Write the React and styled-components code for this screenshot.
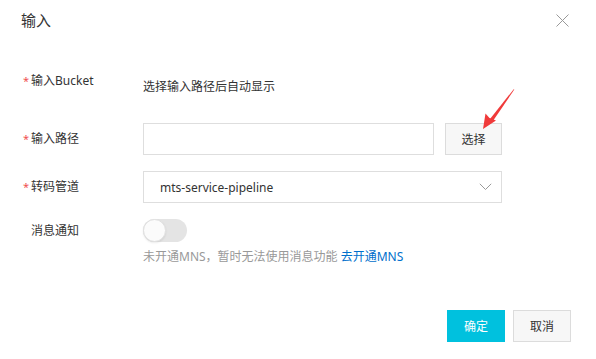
import React from "react";
import styled, { createGlobalStyle } from "styled-components";

const Global = createGlobalStyle`
  html, body { margin: 0; padding: 0; background: #fff; }
  body {
    font-family: "Noto Sans", "Noto Sans CJK SC", sans-serif;
    color: #333;
    -webkit-font-smoothing: antialiased;
  }
  * { box-sizing: border-box; }
`;

const Dialog = styled.div`
  position: relative;
  width: 596px;
  height: 359px;
  background: #fff;
  display: flex;
  flex-direction: column;
`;

const Header = styled.div`
  height: 40px;
  display: flex;
  align-items: center;
  justify-content: space-between;
  padding: 0 27px 0 21px;
`;

const Title = styled.div`
  font-size: 15px;
  line-height: 18px;
  color: #333;
`;

const Close = styled.button`
  width: 13px;
  height: 13px;
  padding: 0;
  border: 0;
  background: none;
  display: flex;
  align-items: center;
  justify-content: center;
  cursor: pointer;
`;

const Body = styled.div`
  padding: 33px 0 0 23px;
  display: flex;
  flex-direction: column;
`;

const Row = styled.div`
  display: grid;
  grid-template-columns: 120px 359px;
  align-items: ${(p) => (p.$top ? "start" : "center")};
  margin-bottom: ${(p) => p.$mb ?? 16}px;
`;

const Label = styled.div`
  font-size: 12px;
  line-height: 16px;
  color: #333;
  padding-left: 8px;
  padding-top: ${(p) => p.$pt ?? 0}px;
`;

const Star = styled.span`
  display: inline-block;
  width: 8px;
  margin-left: -8px;
  color: #f05050;
  font-size: 11px;
`;

const Value = styled.div`
  font-size: 12px;
  line-height: 16px;
  color: #333;
  padding-top: ${(p) => p.$pt ?? 0}px;
`;

const Field = styled.div`
  display: flex;
  gap: 11px;
`;

const Input = styled.input`
  width: 291px;
  height: 32px;
  border: 1px solid #dedede;
  outline: none;
  padding: 0 10px;
  font: inherit;
  font-size: 12px;
`;

const Button = styled.button`
  height: 32px;
  width: ${(p) => p.$w ?? 57}px;
  border: 1px solid ${(p) => (p.$primary ? "#00c1de" : "#dcdcdc")};
  background: ${(p) => (p.$primary ? "#00c1de" : "#f7f7f7")};
  color: ${(p) => (p.$primary ? "#fff" : "#333")};
  font-family: inherit;
  font-size: 12px;
  padding: 0;
  cursor: pointer;
`;

const Select = styled.div`
  height: 32px;
  width: 359px;
  border: 1px solid #dedede;
  display: flex;
  align-items: center;
  justify-content: space-between;
  padding: 0 9px 0 16px;
  font-size: 12px;
  color: #333;
`;

const Switch = styled.div`
  width: 44px;
  height: 23px;
  border-radius: 12px;
  background: #e4e4e4;
  display: flex;
  align-items: center;
`;

const Knob = styled.div`
  width: 23px;
  height: 23px;
  border-radius: 50%;
  background: #fbfbfb;
  border: 1px solid #e0e0e0;
  box-shadow: 0 1px 2px rgba(0, 0, 0, 0.08);
`;

const NotifyCol = styled.div`
  display: flex;
  flex-direction: column;
  gap: 6px;
`;

const Hint = styled.div`
  font-size: 12px;
  line-height: 18px;
  color: #999;
  white-space: nowrap;
`;

const Link = styled.a`
  color: #0070cc;
  text-decoration: none;
`;

const Footer = styled.div`
  margin-top: auto;
  display: flex;
  justify-content: flex-end;
  gap: 8px;
  padding: 0 25px 17px 0;
`;

const Annotation = styled.svg`
  position: absolute;
  left: 0;
  top: 0;
  pointer-events: none;
`;

export default function App() {
  return (
    <>
      <Global />
      <Dialog>
        <Header>
          <Title>输入</Title>
          <Close aria-label="close">
            <svg width="13" height="13" viewBox="0 0 13 13">
              <path d="M0.5 0.5 L12.5 12.5 M12.5 0.5 L0.5 12.5" stroke="#999" strokeWidth="1" fill="none" />
            </svg>
          </Close>
        </Header>
        <Body>
          <Row $top $mb={28}>
            <Label>
              <Star>*</Star>输入Bucket
            </Label>
            <Value $pt={6}>选择输入路径后自动显示</Value>
          </Row>
          <Row>
            <Label>
              <Star>*</Star>输入路径
            </Label>
            <Field>
              <Input />
              <Button>选择</Button>
            </Field>
          </Row>
          <Row>
            <Label>
              <Star>*</Star>转码管道
            </Label>
            <Select>
              <span>mts-service-pipeline</span>
              <svg width="13" height="8" viewBox="0 0 13 8">
                <path d="M0.8 0.8 L6.5 6.5 L12.2 0.8" stroke="#999" strokeWidth="1" fill="none" />
              </svg>
            </Select>
          </Row>
          <Row $top $mb={0}>
            <Label $pt={4}>消息通知</Label>
            <NotifyCol>
              <Switch>
                <Knob />
              </Switch>
              <Hint>
                未开通MNS，暂时无法使用消息功能 <Link href="#">去开通MNS</Link>
              </Hint>
            </NotifyCol>
          </Row>
        </Body>
        <Footer>
          <Button $primary $w={58}>确定</Button>
          <Button $w={58}>取消</Button>
        </Footer>
        <Annotation width="596" height="359" viewBox="0 0 596 359">
          <polygon points="514.3,89.6 513.7,89.2 489.6,119.6 492.4,121.8" fill="#f03a3a" />
          <polygon points="483,129 485.5,113.5 489.5,118 496,120.5" fill="#f03a3a" />
        </Annotation>
      </Dialog>
    </>
  );
}
